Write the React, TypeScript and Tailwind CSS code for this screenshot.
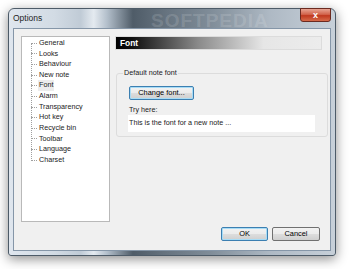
const pages = [
  'General',
  'Looks',
  'Behaviour',
  'New note',
  'Font',
  'Alarm',
  'Transparency',
  'Hot key',
  'Recycle bin',
  'Toolbar',
  'Language',
  'Charset',
];

function TreeItem({ label, selected }: { label: string; selected?: boolean }) {
  return (
    <div className="flex h-[10.64px] items-center">
      <div className="w-[6px] border-t border-dotted border-[#a0a0a0]" />
      <span className={selected ? 'ml-[1px] px-[1px] bg-[#ececec]' : 'ml-[1px] px-[1px]'}>{label}</span>
    </div>
  );
}

function WinButton({ label, focused }: { label: string; focused?: boolean }) {
  return (
    <button
      className={
        'h-[14px] w-full rounded-[2px] border bg-[linear-gradient(#f2f2f2,#ebebeb_50%,#dddddd_51%,#cfcfcf)] text-[7.4px] leading-none text-black ' +
        (focused ? 'border-[#3c7fb1] shadow-[inset_0_0_0_1px_#a7dcf6]' : 'border-[#707070]')
      }
    >
      {label}
    </button>
  );
}

export default function App() {
  return (
    <div
      className="h-[269px] w-[350px] overflow-hidden bg-white pl-[8px] pt-[8px] text-[7.2px] text-[#1a1a1a]"
      style={{ fontFamily: '"Liberation Sans", Arial, sans-serif' }}
    >
      <div className="relative flex h-[248px] w-[328px] flex-col rounded-t-[6px] rounded-b-[3px] border border-[#4d5b68] bg-[linear-gradient(90deg,#dfe6ee_0%,#d2dbe4_14%,#c0cbd6_22%,#e4eaf0_26%,#b4c0cc_30%,#4f5c68_38%,#66737f_48%,#808d99_62%,#aeb9c4_80%,#c7d0d9_100%)] shadow-[0_3px_12px_rgba(0,0,0,0.45)]">
        {/* title bar */}
        <div className="relative flex h-[19px] items-center pl-[4px]">
          <span className="text-[8.5px] text-[#1e1e1e]">Options</span>
          <span className="pointer-events-none absolute left-[142px] top-[-2px] text-[19px] font-bold tracking-[1px] text-white/15">
            SOFTPEDIA
          </span>
          <div className="absolute right-[4px] top-[-1px] flex h-[14px] w-[31px] items-center justify-center rounded-b-[3px] border border-[#6b2a20] bg-[linear-gradient(#e8a493,#d2644c_45%,#c0391f_55%,#d66a4a)]">
            <span className="text-[9px] font-bold leading-none text-white">x</span>
          </div>
        </div>

        {/* client area */}
        <div className="mx-[4px] mb-[4px] flex flex-1 flex-col border border-[#8596a8] bg-[#f0f0f0]">
          <div className="flex gap-[5px] pl-[7px] pt-[7px]">
            {/* tree */}
            <div className="relative h-[186px] w-[89px] border border-[#b9b9b9] bg-white pl-[9px] pt-[1px]">
              <div className="absolute left-[9px] top-[6px] h-[118px] border-l border-dotted border-[#a0a0a0]" />
              {pages.map((p) => (
                <TreeItem key={p} label={p} selected={p === 'Font'} />
              ))}
            </div>

            {/* right panel */}
            <div className="flex w-[207px] flex-col">
              <div className="flex h-[14px] items-center border border-[#dcdcdc] bg-[linear-gradient(90deg,#000_0%,#111_8%,#8a8a8a_40%,#e6e6e6_72%,#ececec_100%)] pl-[4px]">
                <span className="text-[8.4px] font-bold text-white">Font</span>
              </div>

              <fieldset className="ml-[1px] mr-[4px] mt-[18px] h-[69px] rounded-[3px] border border-[#dcdcdc] px-[12px] pb-[4px]">
                <legend className="ml-[-6px] px-[1px] text-[7.2px]">Default note font</legend>
                <div className="mt-[7px] flex">
                  <div className="w-[65px]">
                    <WinButton label="Change font..." focused />
                  </div>
                </div>
                <div className="mt-[6px] leading-none">Try here:</div>
                <div className="ml-[-1px] mt-[2px] flex h-[17px] w-[187px] items-center bg-white pl-[1px]">
                  This is the font for a new note ...
                </div>
              </fieldset>
            </div>
          </div>

          <div className="mr-[10px] mt-[5px] flex justify-end gap-[4px]">
            <div className="w-[47px]">
              <WinButton label="OK" focused />
            </div>
            <div className="w-[48px]">
              <WinButton label="Cancel" />
            </div>
          </div>
        </div>
      </div>
    </div>
  );
}
